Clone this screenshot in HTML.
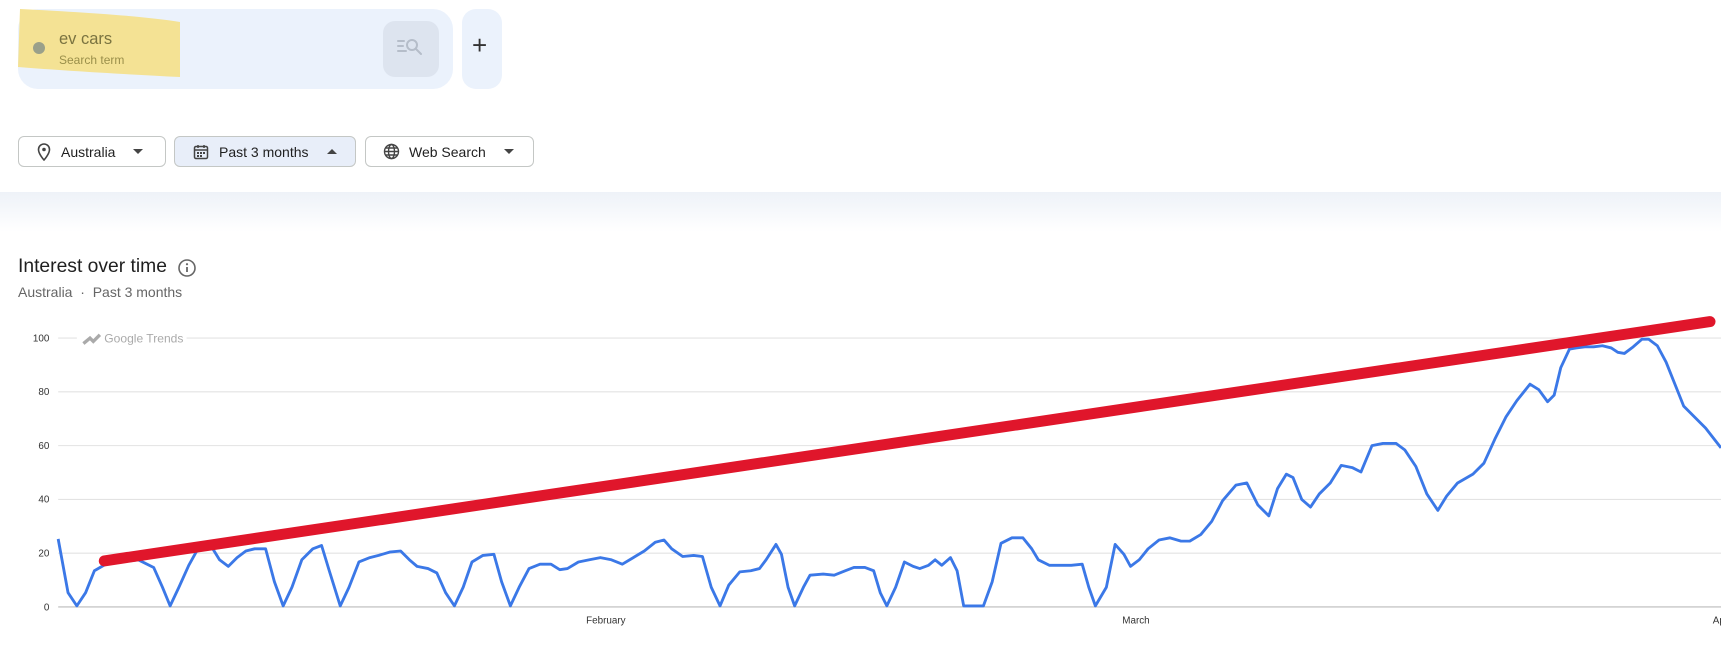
<!DOCTYPE html>
<html><head><meta charset="utf-8"><style>
body{margin:0;width:1721px;height:660px;overflow:hidden;background:#fff;font-family:"Liberation Sans",Arial,sans-serif;position:relative}
.a{position:absolute}
.chip{position:absolute;top:136px;height:31px;border:1px solid #c4c7c5;border-radius:6px;box-sizing:border-box;display:flex;align-items:center;font-size:14px;color:#1f1f1f}
</style></head><body>
<div class="a" style="left:18px;top:9px;width:435px;height:80px;background:#ebf2fc;border-radius:20px"></div>
<svg class="a" style="left:18px;top:9px" width="165" height="70"><path d="M2 0 C40 2 120 6 162 13 L162 68 C120 66 50 62 0 58 Z" fill="#f4e294"/></svg>
<div class="a" style="left:33px;top:42px;width:12px;height:12px;border-radius:50%;background:#9aa08a"></div>
<div class="a" style="left:59px;top:30px;font-size:16.5px;color:#7a7340">ev cars</div>
<div class="a" style="left:59px;top:53px;font-size:12px;color:#9a8f4a">Search term</div>
<div class="a" style="left:383px;top:21px;width:56px;height:56px;border-radius:12px;background:#dde4ef"></div>
<svg class="a" style="left:396px;top:35px" width="30" height="28"><g stroke="#b5bdc9" stroke-width="2" fill="none" stroke-linecap="round"><path d="M2 6h6M2 11h5M2 16h8"/><circle cx="16" cy="10" r="5"/><path d="M20 14l5 5"/></g></svg>
<div class="a" style="left:462px;top:9px;width:40px;height:80px;background:#ebf2fc;border-radius:14px"></div>
<div class="a" style="left:472px;top:30px;font-size:26px;color:#333">+</div>

<div class="chip" style="left:18px;width:148px"><svg style="margin-left:18px" width="14" height="18"><path d="M7 1a5.5 5.5 0 0 0-5.5 5.5C1.5 11 7 17 7 17s5.5-6 5.5-10.5A5.5 5.5 0 0 0 7 1z" fill="none" stroke="#444" stroke-width="1.6"/><circle cx="7" cy="6.5" r="1.8" fill="#444"/></svg><span style="margin-left:10px">Australia</span><span style="margin-left:18px;border:5px solid transparent;border-top:5px solid #444;margin-top:5px"></span></div>
<div class="chip" style="left:174px;width:182px;background:#e8eef9"><svg style="margin-left:18px" width="16" height="16"><rect x="1.5" y="2.5" width="13" height="12" rx="1.5" fill="none" stroke="#444" stroke-width="1.5"/><path d="M1.5 6h13M5 1v3M11 1v3" stroke="#444" stroke-width="1.5"/><g fill="#444"><rect x="4" y="8" width="2" height="2"/><rect x="7" y="8" width="2" height="2"/><rect x="10" y="8" width="2" height="2"/><rect x="4" y="11" width="2" height="2"/><rect x="7" y="11" width="2" height="2"/></g></svg><span style="margin-left:10px">Past 3 months</span><span style="margin-left:18px;border:5px solid transparent;border-bottom:5px solid #444;margin-top:-5px"></span></div>
<div class="chip" style="left:365px;width:169px"><svg style="margin-left:17px" width="17" height="17"><g fill="none" stroke="#444" stroke-width="1.4"><circle cx="8.5" cy="8.5" r="7"/><ellipse cx="8.5" cy="8.5" rx="3" ry="7"/><path d="M1.5 8.5h14M2.8 5h11.4M2.8 12h11.4"/></g></svg><span style="margin-left:9px">Web Search</span><span style="margin-left:18px;border:5px solid transparent;border-top:5px solid #444;margin-top:5px"></span></div>

<div class="a" style="left:0;top:192px;width:1721px;height:40px;background:linear-gradient(#eef2f8,#fff)"></div>
<div class="a" style="left:18px;top:256px;font-size:19.3px;color:#1f1f1f">Interest over time</div>
<svg class="a" style="left:177px;top:258px" width="20" height="20"><circle cx="10" cy="10" r="8" fill="none" stroke="#666" stroke-width="1.6"/><path d="M10 9v5" stroke="#666" stroke-width="1.8"/><circle cx="10" cy="6.2" r="1.1" fill="#666"/></svg>
<div class="a" style="left:18px;top:284px;font-size:14px;color:#666">Australia &nbsp;·&nbsp; Past 3 months</div>

<svg class="a" style="left:0;top:0" width="1721" height="660" viewBox="0 0 1568 601.3" preserveAspectRatio="none">
<g stroke="#e3e3e3" stroke-width="1"><path d="M53 308H70M170 308H1568M53 357H1568M53 406H1568M53 455H1568M53 504H1568"/></g>
<path d="M53 553H1568" stroke="#bbb" stroke-width="1"/>
<g font-size="9" fill="#333" text-anchor="end" font-family="Liberation Sans,sans-serif"><text x="45" y="311">100</text><text x="45" y="360">80</text><text x="45" y="409">60</text><text x="45" y="458">40</text><text x="45" y="507">20</text><text x="45" y="556">0</text></g>
<g font-size="9" fill="#333" text-anchor="middle" font-family="Liberation Sans,sans-serif"><text x="552" y="568">February</text><text x="1035" y="568">March</text><text x="1566" y="568">Ap</text></g>
<path d="M76 313l6-5 3 3 6-6" stroke="#aaa" stroke-width="3" fill="none"/>
<text x="95" y="312" font-size="11" fill="#aaa" font-family="Liberation Sans,sans-serif">Google Trends</text>
<polyline fill="none" stroke="#3b78e7" stroke-width="2.6" stroke-linejoin="round" points="53,491 62,540 70,552 78,540 86,520 98,513 110,512 126,510 140,517 148,535 155,552 163,535 172,515 182,497 192,497 200,510 208,516 216,508 224,502 232,500 242,500 250,530 258,552 266,535 275,510 285,500 293,497 300,520 310,552 318,535 327,512 337,508 345,506 355,503 365,502 373,510 380,516 390,518 398,522 406,540 414,552 422,535 430,512 440,506 450,505 457,530 465,552 473,535 482,518 492,514 502,514 510,519 517,518 527,512 537,510 547,508 557,510 567,514 577,508 587,502 597,494 605,492 612,500 622,507 632,506 640,507 648,535 656,552 664,533 674,521 684,520 692,518 698,510 707,496 712,505 718,535 724,552 732,535 738,524 750,523 760,524 770,520 778,517 788,517 796,520 802,540 808,552 816,535 824,512 832,516 838,518 846,515 852,510 858,515 866,508 872,520 878,552 886,552 896,552 904,530 912,495 922,490 932,490 940,500 946,510 956,515 966,515 976,515 986,514 992,535 998,552 1008,535 1016,496 1024,505 1030,516 1038,510 1046,500 1056,492 1066,490 1076,493 1084,493 1094,487 1104,475 1114,456 1126,442 1136,440 1146,460 1156,470 1164,445 1172,432 1178,435 1186,455 1194,462 1202,450 1212,440 1222,424 1232,426 1240,430 1250,406 1260,404 1272,404 1280,410 1290,425 1300,450 1310,465 1318,452 1328,440 1342,432 1352,422 1362,400 1372,380 1382,365 1394,350 1402,355 1410,366 1416,360 1422,335 1430,318 1436,317 1444,316 1452,316 1460,315 1468,317 1474,321 1480,322 1488,316 1496,309 1502,309 1510,315 1518,330 1528,355 1534,370 1544,380 1554,390 1568,408"/>
<path d="M95 511L1558 293" stroke="#e0162b" stroke-width="10" stroke-linecap="round"/>
</svg>
</body></html>
